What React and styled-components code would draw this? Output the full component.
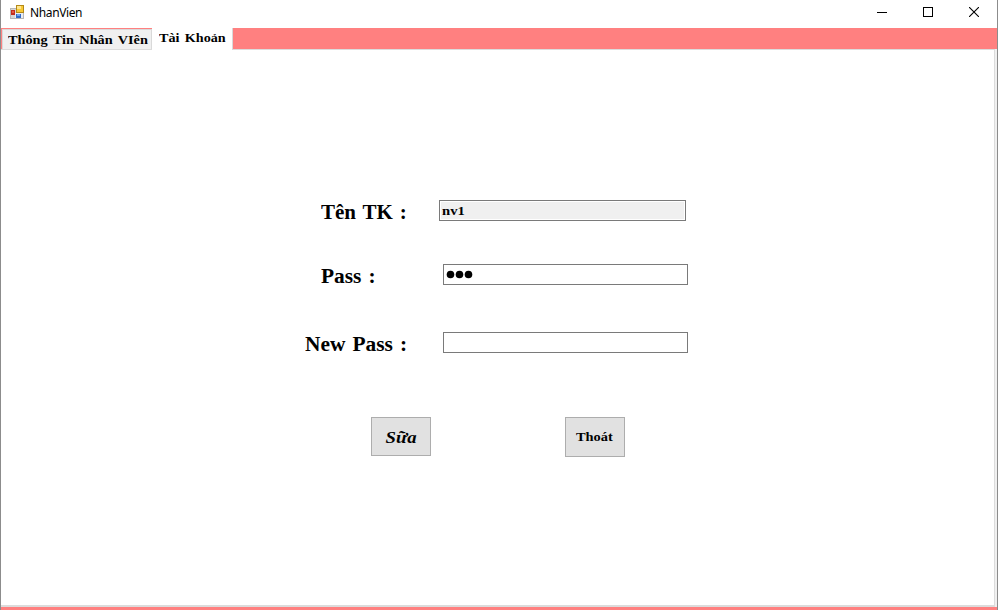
import React from "react";
import styled, { createGlobalStyle } from "styled-components";

const GlobalStyle = createGlobalStyle`
  * { box-sizing: border-box; }
  body { margin: 0; background: #fff; overflow: hidden; }
`;

const Window = styled.main`
  display: flex;
  flex-direction: column;
  width: 998px;
  height: 610px;
  border-left: 1px solid #8c8c8c;
  border-right: 1px solid #8c8c8c;
  background: #fff;
  color: #000;
`;

const TitleBar = styled.header`
  display: flex;
  align-items: center;
  flex: 0 0 28px;
  height: 28px;
  padding: 0 0 3px 9px;
`;

const AppIcon = styled.svg`
  width: 14px;
  height: 14px;
  margin: 0 6px 1px 0;
`;

const Title = styled.h1`
  flex: 1;
  margin: 0;
  font: 400 12px/16px "Noto Sans", "Open Sans", sans-serif;
  letter-spacing: -0.38px;
`;

const Controls = styled.div`
  display: flex;
`;

const ControlButton = styled.button`
  display: grid;
  place-items: center;
  width: 46px;
  height: 25px;
  padding: 0 0 1px;
  border: 0;
  background: transparent;
  svg { display: block; }
`;

const TabStrip = styled.nav`
  display: flex;
  align-items: flex-end;
  flex: 0 0 21px;
  height: 21px;
  padding-left: 1px;
  background: #ff8080;
`;

const Tab = styled.button`
  display: flex;
  justify-content: flex-start;
  align-items: ${(p) => (p.$active ? "flex-start" : "center")};
  width: ${(p) => (p.$active ? 81 : 150)}px;
  height: ${(p) => (p.$active ? 22 : 20)}px;
  margin: 0 0 ${(p) => (p.$active ? -1 : 0)}px;
  padding: ${(p) => (p.$active ? "4px 0 0 7px" : "3px 0 0 5px")};
  border: solid #d9d9d9;
  border-width: ${(p) => (p.$active ? "0 1px 0 0" : "1px 1px 0 1px")};
  background: ${(p) => (p.$active ? "#fff" : "#f0f0f0")};
  color: #000;
  position: relative;
  z-index: ${(p) => (p.$active ? 1 : 0)};
`;

const Panel = styled.section`
  flex: 1;
  border: solid #dcdcdc;
  border-width: 1px 1px 2px 0;
  margin-right: 2px;
  padding-top: 150px;
`;

const PanelFrame = styled.div`
  display: flex;
  flex: 1;
  background: #f0f0f0;
  border-bottom: 3px solid #ff8080;
  ${Panel} { background: #fff; }
`;

const Lettering = styled.span`
  display: inline-block;
  font-family: "Liberation Serif", serif;
  font-weight: 700;
  font-style: ${(p) => (p.$italic ? "italic" : "normal")};
  font-size: ${(p) => p.$size}px;
  line-height: 1.15;
  word-spacing: ${(p) => p.$gap || 0}px;
  white-space: pre;
  transform: scaleX(${(p) => p.$stretch});
  transform-origin: ${(p) => p.$origin || "left"} center;
`;

const Form = styled.form`
  display: flex;
  flex-direction: column;
  margin: 0;
`;

const FieldRow = styled.div`
  display: flex;
  align-items: flex-start;
  height: ${(p) => p.$height}px;
  padding-left: ${(p) => p.$indent}px;
`;

const FieldLabel = styled.label`
  width: ${(p) => p.$width}px;
  padding-top: 1px;
  line-height: 24px;
`;

const Field = styled.div`
  display: flex;
  align-items: center;
  width: ${(p) => (p.$readOnly ? 247 : 245)}px;
  height: 21px;
  padding: ${(p) => (p.$readOnly ? 2 : 0)}px 0 0 2px;
  border: 1px solid #7a7a7a;
  background: ${(p) => (p.$readOnly ? "#f0f0f0" : "#fff")};
  box-shadow: inset 0 0 0 1px #fff;
`;

const Dots = styled.svg`
  width: 28px;
  height: 9px;
`;

const Actions = styled.div`
  display: flex;
  gap: 134px;
  padding-left: 370px;
`;

const ActionButton = styled.button`
  display: flex;
  align-items: center;
  justify-content: center;
  width: 60px;
  height: ${(p) => p.$height}px;
  padding: 2px ${(p) => (p.$height === 39 ? "0 0 1px" : "1px 0 0")};
  border: 1px solid #adadad;
  background: #e1e1e1;
  color: #000;
`;

export default function App() {
  return (
    <>
      <GlobalStyle />
      <Window>
        <TitleBar>
          <AppIcon viewBox="0 0 14 14" shapeRendering="crispEdges">
            <path fill="#d7d7d7" d="M0 3h7v11H0z" />
            <path fill="#b7b7b7" d="M0 3h7v1H0zM0 3h1v11H0zM0 13h14v1H0zM13 8h1v6h-1z" />
            <path fill="#c32e1e" d="M1 5h4v5H1z" />
            <path fill="#e45b43" d="M2 6h2v2H2z" />
            <path fill="#b48a18" d="M6 0h8v8H6z" />
            <path fill="#f8c936" d="M7 1h6v6H7z" />
            <path fill="#ffe691" d="M7 1h4v3H7z" />
            <path fill="#e9edf5" d="M5 8h8v5H5z" />
            <path fill="#316bc5" d="M6 9h5v4H6z" />
            <path fill="#73a5eb" d="M7 9h3v2H7z" />
          </AppIcon>
          <Title>NhanVien</Title>
          <Controls>
            <ControlButton aria-label="Minimize">
              <svg width="10" height="10" shapeRendering="crispEdges"><path d="M0 5h10v1H0z" /></svg>
            </ControlButton>
            <ControlButton aria-label="Maximize">
              <svg width="10" height="10" shapeRendering="crispEdges"><path d="M.5.5h9v9h-9z" fill="none" stroke="#000" /></svg>
            </ControlButton>
            <ControlButton aria-label="Close">
              <svg width="10" height="10"><path d="M0 0l10 10M10 0L0 10" stroke="#000" strokeWidth="1.1" /></svg>
            </ControlButton>
          </Controls>
        </TitleBar>
        <TabStrip>
          <Tab><Lettering $size={12} $stretch={1.19} $gap={1.5}>Thông Tin Nhân VIên</Lettering></Tab>
          <Tab $active><Lettering $size={12} $stretch={1.18} $gap={1.5}>Tài Khoản</Lettering></Tab>
        </TabStrip>
        <PanelFrame>
          <Panel>
            <Form>
              <FieldRow $height={64} $indent={320}>
                <FieldLabel $width={118}><Lettering $size={20} $stretch={1.05} $gap={1.6}>Tên TK :</Lettering></FieldLabel>
                <Field $readOnly><Lettering $size={12} $stretch={1.22}>nv1</Lettering></Field>
              </FieldRow>
              <FieldRow $height={68} $indent={320}>
                <FieldLabel $width={122}><Lettering $size={20} $stretch={1.07} $gap={1.5}>Pass :</Lettering></FieldLabel>
                <Field>
                  <Dots viewBox="0 0 28 9">
                    <circle cx="4.5" cy="4.5" r="3.8" />
                    <circle cx="13.5" cy="4.5" r="3.8" />
                    <circle cx="22.5" cy="4.5" r="3.8" />
                  </Dots>
                </Field>
              </FieldRow>
              <FieldRow $height={85} $indent={304}>
                <FieldLabel $width={138}><Lettering $size={20} $stretch={1.07} $gap={1.6}>New Pass :</Lettering></FieldLabel>
                <Field />
              </FieldRow>
              <Actions>
                <ActionButton type="button" $height={39}><Lettering $size={17} $stretch={1.1} $origin="center" $italic>Sữa</Lettering></ActionButton>
                <ActionButton type="button" $height={40}><Lettering $size={12} $stretch={1.2} $origin="center">Thoát</Lettering></ActionButton>
              </Actions>
            </Form>
          </Panel>
        </PanelFrame>
      </Window>
    </>
  );
}
